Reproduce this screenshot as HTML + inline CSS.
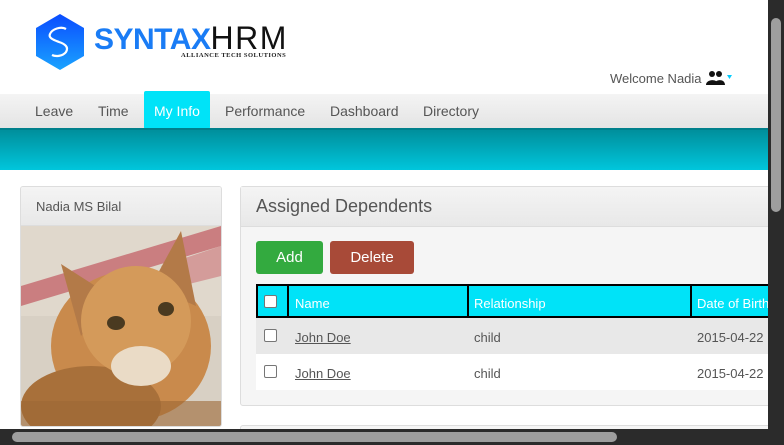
<!DOCTYPE html>
<html><head><meta charset="utf-8"><style>
*{margin:0;padding:0;box-sizing:border-box}
body{width:784px;height:445px;overflow:hidden;background:#fff;font-family:"Liberation Sans",Arial,sans-serif;position:relative}
.abs{position:absolute}
.nav{left:0;top:94px;width:768px;height:35px;background:linear-gradient(#f4f4f4,#e4e4e4)}
.nav span{position:absolute;top:9px;font-size:14px;color:#555}
.band{left:0;top:128px;width:768px;height:42px;background:linear-gradient(#008f9c,#00c6dc);border-top:2px solid #00808c}
.panel{border:1px solid #ddd;border-radius:3px;background:#f5f5f5}
.ph{background:linear-gradient(#f4f4f4,#e8e8e8);border-bottom:1px solid #ddd;color:#555}
.cb{position:absolute;width:13px;height:13px;border:1px solid #767676;border-radius:2px;background:#fff}
.t{position:absolute;font-size:13px;color:#555}
</style></head><body>
<svg class="abs" style="left:35px;top:13px" width="50" height="58" viewBox="0 0 50 58">
<defs><linearGradient id="g" x1="0" y1="0" x2="0" y2="1"><stop offset="0" stop-color="#0a4cff"/><stop offset="1" stop-color="#1aa3ff"/></linearGradient></defs>
<polygon points="25,1 49,15 49,43 25,57 1,43 1,15" fill="url(#g)"/>
<path d="M31 16 C26 13 17 16 15 21 C13 25 19 27 24 29 C30 31 34 34 31 39 C28 43 21 44 17 42" stroke="#fff" stroke-width="2.2" fill="none"/>
</svg>
<div class="abs" style="left:94px;top:20px;font-size:30px;font-weight:bold;letter-spacing:-0.5px;color:#1a7cf5;white-space:nowrap">SYNTAX<span style="color:#111;font-weight:normal;font-size:32px;letter-spacing:1.5px">HRM</span></div>
<div class="abs" style="left:181px;top:52px;font-size:6.5px;font-weight:bold;color:#222;font-family:'Liberation Serif',serif;letter-spacing:0.5px">ALLIANCE TECH SOLUTIONS</div>
<div class="abs" style="left:610px;top:71px;font-size:13px;color:#555">Welcome Nadia</div>
<svg class="abs" style="left:706px;top:70px" width="28" height="16" viewBox="0 0 28 16"><circle cx="6" cy="4" r="3" fill="#111"/><circle cx="13" cy="4" r="3" fill="#111"/><path d="M0 15 C0 9 12 8 12 15Z M8 15 C8 9 19 8 19 15Z" fill="#111"/><polygon points="21,5 26,5 23.5,9" fill="#0cf"/></svg>
<div class="abs nav"><span style="left:35px">Leave</span><span style="left:98px">Time</span>
<div class="abs" style="left:144px;top:-3px;width:66px;height:38px;background:#00e3f8;border-radius:2px"></div>
<span style="left:154px;color:#fff">My Info</span><span style="left:225px">Performance</span><span style="left:330px">Dashboard</span><span style="left:423px">Directory</span></div>
<div class="abs band"></div>
<div class="abs panel" style="left:20px;top:186px;width:202px;height:241px;overflow:hidden">
<div class="ph" style="height:39px;padding:12px 15px;font-size:13px">Nadia MS Bilal</div>
<svg width="200" height="201" viewBox="0 0 200 201" style="display:block">
<rect width="200" height="201" fill="#e0d8cc"/>
<path d="M0 60 L200 0 L200 20 L0 80Z" fill="#c05860" opacity=".7"/>
<path d="M140 40 L200 20 L200 50 L160 60Z" fill="#c86068" opacity=".5"/>
<rect x="0" y="90" width="200" height="111" fill="#d8d0c4"/>
<ellipse cx="110" cy="120" rx="80" ry="75" fill="#c98a4c"/>
<ellipse cx="70" cy="180" rx="70" ry="40" fill="#a8703a"/>
<polygon points="40,38 90,70 60,110" fill="#b37a48"/>
<polygon points="160,5 175,80 130,60" fill="#b37a48"/>
<ellipse cx="115" cy="95" rx="55" ry="55" fill="#d49a5a"/>
<ellipse cx="95" cy="97" rx="9" ry="7" fill="#4a3a20"/><ellipse cx="145" cy="83" rx="8" ry="7" fill="#4a3a20"/>
<ellipse cx="120" cy="140" rx="30" ry="20" fill="#eadbc6"/>
<rect x="0" y="175" width="200" height="26" fill="#9c6836" opacity=".6"/>
</svg></div>
<div class="abs panel" style="left:240px;top:186px;width:540px;height:220px">
<div class="ph" style="height:40px;padding:9px 15px;font-size:18px">Assigned Dependents</div>
<div class="abs" style="left:15px;top:54px;width:67px;height:33px;background:#33aa3f;border-radius:3px;color:#fff;font-size:15px;text-align:center;line-height:33px">Add</div>
<div class="abs" style="left:89px;top:54px;width:84px;height:33px;background:#a84a38;border-radius:3px;color:#fff;font-size:15px;text-align:center;line-height:33px">Delete</div>
<div class="abs" style="left:15px;top:97px;width:512px;height:34px;background:#00e3f8;border:2px solid #000;border-right:none"></div>
<div class="abs" style="left:46px;top:97px;width:2px;height:34px;background:#000"></div>
<div class="abs" style="left:226px;top:97px;width:2px;height:34px;background:#000"></div>
<div class="abs" style="left:449px;top:97px;width:2px;height:34px;background:#000"></div>
<div class="cb" style="left:23px;top:108px"></div>
<div class="t" style="left:54px;top:109px;color:#fff">Name</div>
<div class="t" style="left:233px;top:109px;color:#fff">Relationship</div>
<div class="t" style="left:456px;top:109px;color:#fff;white-space:nowrap">Date of Birth</div>
<div class="abs" style="left:15px;top:131px;width:512px;height:36px;background:#e8e8e8"></div>
<div class="abs" style="left:15px;top:167px;width:512px;height:36px;background:#fff"></div>
<div class="cb" style="left:23px;top:142px"></div><div class="cb" style="left:23px;top:178px"></div>
<div class="t" style="left:54px;top:143px;text-decoration:underline">John Doe</div>
<div class="t" style="left:54px;top:179px;text-decoration:underline">John Doe</div>
<div class="t" style="left:233px;top:143px">child</div>
<div class="t" style="left:233px;top:179px">child</div>
<div class="t" style="left:456px;top:143px">2015-04-22</div>
<div class="t" style="left:456px;top:179px">2015-04-22</div>
</div>
<div class="abs panel" style="left:240px;top:425px;width:540px;height:20px;background:#f5f5f5"></div>
<div class="abs" style="left:768px;top:0;width:16px;height:445px;background:#2b2b2b"></div>
<div class="abs" style="left:771px;top:18px;width:10px;height:194px;background:#9e9e9e;border-radius:5px"></div>
<div class="abs" style="left:0;top:429px;width:784px;height:16px;background:#2b2b2b"></div>
<div class="abs" style="left:12px;top:432px;width:605px;height:10px;background:#9e9e9e;border-radius:5px"></div>
</body></html>
